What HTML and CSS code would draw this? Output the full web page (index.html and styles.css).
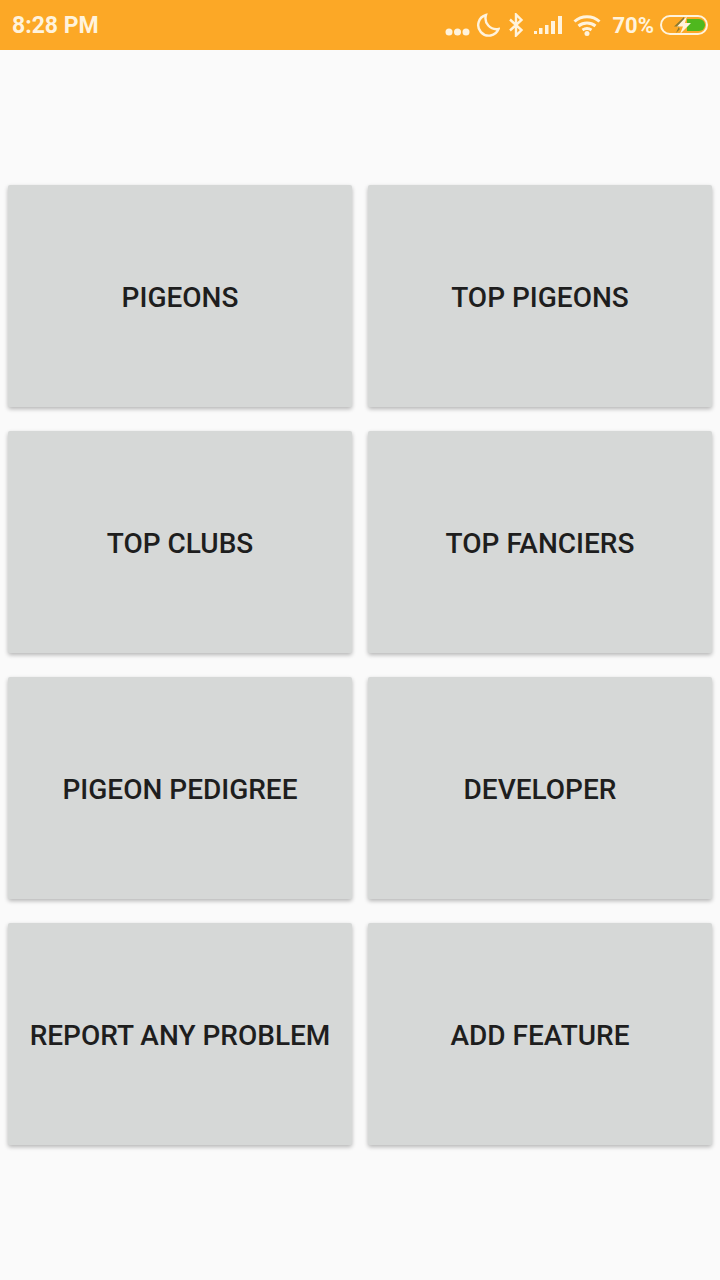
FILE: index.html
```html
<!DOCTYPE html>
<html lang="en">
<head>
    <meta charset="UTF-8">
    <meta name="viewport" content="width=device-width, initial-scale=1.0">
    <title>Pigeons</title>
    <link rel="stylesheet" href="styles.css">
</head>
<body>

<header class="status-bar">
    <span class="clock">8:28 PM</span>
    <div class="status-icons">
        <svg class="icon-dots" width="25" height="8" viewBox="0 0 25 8"><circle cx="4" cy="4" r="3.500"/><circle cx="12.500" cy="4" r="3.500"/><circle cx="21" cy="4" r="3.500"/></svg>
        <svg class="icon-moon" width="24" height="24" viewBox="0 0 24 24"><path d="M10 2A10.500 10.500 0 1 0 22.500 16 A11 11 0 0 1 10 2Z"/></svg>
        <svg class="icon-bt" width="16" height="24" viewBox="0 0 16 24"><path d="M2 6.500 13.500 17 8 22.500V1.500L13.500 7 2 17.500"/></svg>
        <svg class="icon-signal" width="28" height="20" viewBox="0 0 28 20"><rect x="0" y="16" width="3" height="3"/><rect x="5" y="13" width="3.500" height="6"/><rect x="11" y="10" width="3.500" height="9"/><rect x="17" y="6" width="4" height="13"/><rect x="24" y="1" width="4" height="18"/></svg>
        <svg class="icon-wifi" width="30" height="22" viewBox="0 0 30 22"><path d="M2.500 7.500C9.500 1 20.500 1 27.500 7.500M6.500 12C11.500 8 18.500 8 23.500 12M10.500 16C13.500 14 16.500 14 19.500 16"/><circle cx="15" cy="19.500" r="2.500"/></svg>
        <span class="battery-text">70%</span>
        <svg class="icon-battery" width="48" height="20" viewBox="0 0 48 20">
            <rect class="battery-shell" x="1" y="1" width="46" height="18" rx="9"/>
            <path class="battery-fill" d="M27 4H39A6 6 0 0 1 39 16H27Z"/>
            <path class="battery-shadow" d="M24 2 14 11.500H19L16 18 20 14 18 12 24 6Z"/>
            <path class="battery-bolt" d="M27 1 17 11.500H23L20 19 31 8H25Z"/>
        </svg>
    </div>
</header>

<main class="menu-grid">
    <a class="menu-card" href="#">PIGEONS</a>
    <a class="menu-card" href="#">TOP PIGEONS</a>
    <a class="menu-card" href="#">TOP CLUBS</a>
    <a class="menu-card" href="#">TOP FANCIERS</a>
    <a class="menu-card" href="#">PIGEON PEDIGREE</a>
    <a class="menu-card" href="#">DEVELOPER</a>
    <a class="menu-card" href="#">REPORT ANY PROBLEM</a>
    <a class="menu-card" href="#">ADD FEATURE</a>
</main>

</body>
</html>
```

FILE: styles.css
```css
body {
    font-family: Roboto, "Liberation Sans", sans-serif;
    background-color: #fafafa;
    margin: 0;
    padding: 0;
    min-height: 1280px;
}
.status-bar {
    height: 50px;
    background-color: #fca826;
    color: #fff3dc;
    display: flex;
    align-items: center;
    justify-content: space-between;
    padding: 0 12px;
}
.clock {
    font-size: 23px;
    font-weight: 700;
}
.status-icons {
    display: flex;
    align-items: center;
}
.status-icons svg {
    display: block;
}
.icon-dots {
    fill: #fff3dc;
    margin-top: 13px;
}
.icon-moon,
.icon-bt,
.icon-wifi path {
    fill: none;
    stroke: #fff3dc;
    stroke-width: 2.4;
}
.icon-wifi path {
    stroke-width: 3;
}
.icon-moon {
    margin-left: 6px;
}
.icon-bt {
    margin-left: 8px;
}
.icon-wifi circle {
    fill: #fff3dc;
}
.icon-wifi {
    fill: none;
    stroke: none;
    margin-left: 10px;
}
.icon-signal {
    fill: #fff3dc;
    margin-left: 10px;
}
.battery-text {
    font-size: 22px;
    font-weight: 700;
    margin-left: 10px;
}
.icon-battery {
    margin-left: 6px;
}
.battery-shell {
    fill: none;
    stroke: #fff3dc;
    stroke-width: 2;
}
.battery-fill {
    fill: #4fb81e;
}
.battery-shadow {
    fill: #8a7a30;
}
.battery-bolt {
    fill: #fff3dc;
}
.menu-grid {
    display: grid;
    grid-template-columns: 1fr 1fr;
    grid-auto-rows: 222px;
    column-gap: 16px;
    row-gap: 24px;
    padding: 135px 8px 0;
}
.menu-card {
    display: flex;
    align-items: center;
    justify-content: center;
    box-sizing: border-box;
    padding-top: 2px;
    background-color: #d6d8d7;
    color: #1e1e1e;
    font-size: 28px;
    font-weight: 500;
    text-decoration: none;
    border-radius: 2px;
    box-shadow: 0 2px 4px rgba(0, 0, 0, 0.28);
}
```
